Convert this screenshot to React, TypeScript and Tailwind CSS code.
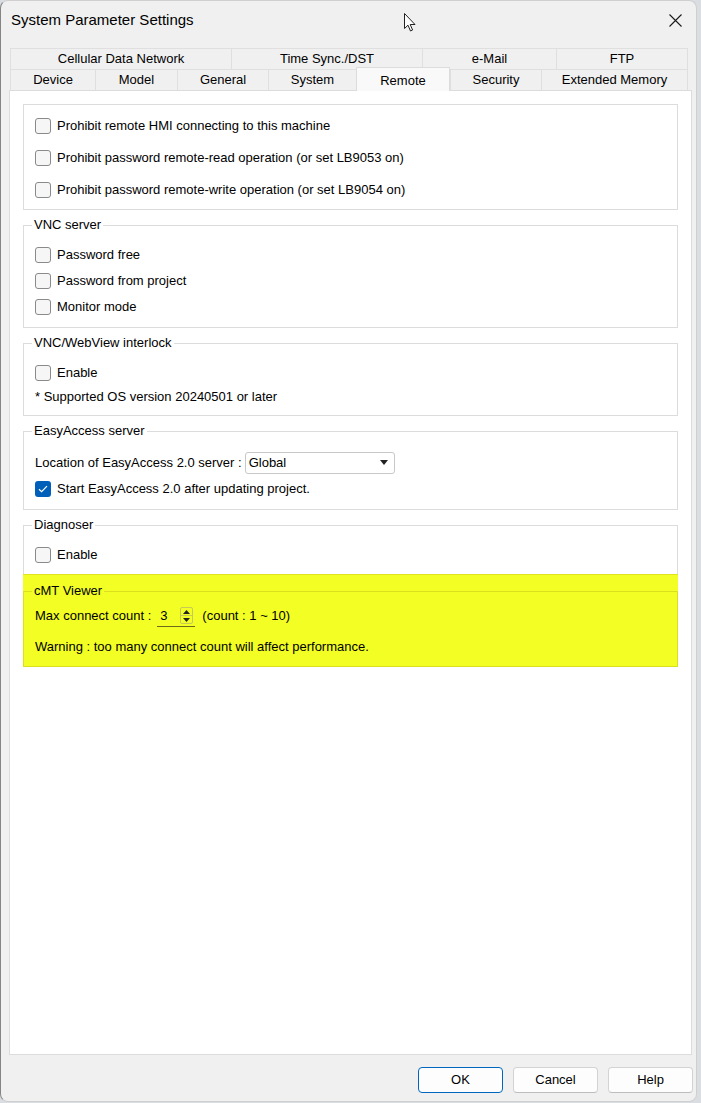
import React from 'react'

const FONT = "font-['Liberation_Sans',Arial,sans-serif]"

function Check({ checked }: { checked?: boolean }) {
  if (checked) {
    return (
      <span className="flex items-center justify-center w-[16px] h-[16px] rounded-[3px] bg-[#005fb8] shrink-0">
        <svg width="10" height="8" viewBox="0 0 10 8">
          <path d="M1 4.2 L3.6 6.6 L9 1.2" fill="none" stroke="#fff" strokeWidth="1.2" />
        </svg>
      </span>
    )
  }
  return (
    <span className="block w-[16px] h-[16px] rounded-[3px] border border-[#8a8a8a] bg-[#f6f6f6] shrink-0" />
  )
}

function CheckRow({ label, checked, h = 'h-[26px]' }: { label: string; checked?: boolean; h?: string }) {
  return (
    <div className={`flex items-center gap-[6px] ${h}`}>
      <Check checked={checked} />
      <span>{label}</span>
    </div>
  )
}

function Group({
  title,
  children,
  className = '',
  border = 'border-[#dcdcdc]',
}: {
  title: string
  children: React.ReactNode
  className?: string
  border?: string
}) {
  return (
    <fieldset className={`border ${border} px-[11px] ${className}`}>
      <legend className="px-[2px] -ml-[3px] leading-[16px]">{title}</legend>
      {children}
    </fieldset>
  )
}

const topTabs = [
  { label: 'Cellular Data Network', w: 'w-[221px]' },
  { label: 'Time Sync./DST', w: 'w-[191px]' },
  { label: 'e-Mail', w: 'w-[134px]' },
  { label: 'FTP', w: 'w-[132px]' },
]

const frontTabs = [
  { label: 'Device', w: 'w-[85px]' },
  { label: 'Model', w: 'w-[82px]' },
  { label: 'General', w: 'w-[91px]' },
  { label: 'System', w: 'w-[88px]' },
  { label: 'Remote', w: 'w-[94px]', active: true },
  { label: 'Security', w: 'w-[91px]' },
  { label: 'Extended Memory', w: 'w-[147px]' },
]

function Tabs() {
  return (
    <div className="ml-[9px] w-[678px] text-[13px]">
      <div className="flex h-[21px]">
        {topTabs.map((t, i) => (
          <div
            key={t.label}
            className={`${t.w} flex items-center justify-center border-t border-l border-[#dfdfdf] ${
              i === topTabs.length - 1 ? 'border-r' : ''
            }`}
          >
            {t.label}
          </div>
        ))}
      </div>
      <div className="flex items-end h-[21px]">
        {frontTabs.map((t, i) =>
          t.active ? (
            <div
              key={t.label}
              className={`${t.w} h-[24px] -mb-px relative z-10 flex items-start pt-[3px] justify-center bg-[#f9f9f9] border-t border-l border-r border-[#dcdcdc]`}
            >
              {t.label}
            </div>
          ) : (
            <div
              key={t.label}
              className={`${t.w} h-[21px] flex items-center justify-center border-t border-l border-[#dfdfdf] ${
                i === frontTabs.length - 1 ? 'border-r' : ''
              }`}
            >
              {t.label}
            </div>
          ),
        )}
      </div>
    </div>
  )
}

function Spin() {
  return (
    <div className="flex items-center w-[38px] h-[21px] border-b border-[#6b6b1a] ml-[6px]">
      <span className="pl-[3px] flex-1">3</span>
      <div className="flex flex-col w-[13px] h-[17px] mr-[2px] border border-[#c9c95a] rounded-[2px]">
        <div className="flex-1 flex items-center justify-center border-b border-[#c9c95a]">
          <svg width="7" height="4" viewBox="0 0 7 4">
            <path d="M0 4 L3.5 0 L7 4 Z" fill="#222" />
          </svg>
        </div>
        <div className="flex-1 flex items-center justify-center">
          <svg width="7" height="4" viewBox="0 0 7 4">
            <path d="M0 0 L7 0 L3.5 4 Z" fill="#222" />
          </svg>
        </div>
      </div>
    </div>
  )
}

function Button({ label, primary }: { label: string; primary?: boolean }) {
  return (
    <button
      className={`w-[85px] h-[26px] rounded-[4px] bg-[#fdfdfd] text-[13px] text-black border ${
        primary ? 'border-[#0067c0]' : 'border-[#d3d3d3] border-b-[#bdbdbd]'
      }`}
    >
      {label}
    </button>
  )
}

export default function App() {
  return (
    <div className={`relative w-[701px] h-[1103px] bg-[#dadde2] overflow-hidden ${FONT} text-black`}>
      <div className="w-[697px] h-[1102px] rounded-[8px] bg-[#f0f0f0] border border-[#cfcfcf] border-l-[#858585] flex flex-col">
        <div className="h-[39px] flex items-center justify-between pl-[10px] pr-[12px]">
          <span className="text-[15px]">System Parameter Settings</span>
          <svg width="13" height="13" viewBox="0 0 13 13" className="mr-[2px]">
            <path d="M0.5 0.5 L12.5 12.5 M12.5 0.5 L0.5 12.5" stroke="#1a1a1a" strokeWidth="1.1" />
          </svg>
        </div>

        <div className="pt-[8px]">
          <Tabs />
        </div>

        <div className="ml-[8px] w-[683px] h-[965px] bg-white border border-[#dcdcdc] px-[13px] pt-[13px] text-[13px]">
          <div className="border border-[#dcdcdc] px-[11px] pt-[5px] pb-[3px]">
            <CheckRow h="h-[32px]" label="Prohibit remote HMI connecting to this machine" />
            <CheckRow h="h-[32px]" label="Prohibit password remote-read operation (or set LB9053 on)" />
            <CheckRow h="h-[32px]" label="Prohibit password remote-write operation (or set LB9054 on)" />
          </div>

          <Group title="VNC server" className="mt-[7px] pt-[9px] pb-[7px]">
            <CheckRow label="Password free" />
            <CheckRow label="Password from project" />
            <CheckRow label="Monitor mode" />
          </Group>

          <Group title="VNC/WebView interlock" className="mt-[7px] pt-[10px] pb-[6px]">
            <CheckRow h="h-[24px]" label="Enable" />
            <div className="h-[24px] flex items-center">* Supported OS version 20240501 or later</div>
          </Group>

          <Group title="EasyAccess server" className="mt-[7px] pt-[10px] pb-[7px]">
            <div className="flex items-center h-[27px]">
              <span>Location of EasyAccess 2.0 server :</span>
              <div className="ml-[3px] w-[150px] h-[22px] rounded-[3px] border border-[#c8c8c8] flex items-center justify-between pl-[3px] pr-[6px]">
                <span>Global</span>
                <svg width="8" height="5" viewBox="0 0 8 5">
                  <path d="M0 0 L8 0 L4 5 Z" fill="#222" />
                </svg>
              </div>
            </div>
            <CheckRow checked label="Start EasyAccess 2.0 after updating project." />
          </Group>

          <Group title="Diagnoser" className="mt-[7px] pt-[9px] pb-[6px] border-b-0">
            <CheckRow label="Enable" />
          </Group>

          <div className="bg-[#f3fe24] border-t border-[#dfe21c]">
            <Group
              title="cMT Viewer"
              border="border-[#dcdf1e] border-t-[#dcdf1e]"
              className="mt-[8px] pt-[6px] pb-[8px]"
            >
              <div className="flex items-center h-[22px]">
                <span>Max connect count :</span>
                <Spin />
                <span className="ml-[7px]">(count : 1 ~ 10)</span>
              </div>
              <div className="mt-[9px] h-[22px] flex items-center">
                Warning : too many connect count will affect performance.
              </div>
            </Group>
          </div>
        </div>

        <div className="flex justify-end gap-[10px] pr-[3px] mt-[12px]">
          <Button label="OK" primary />
          <Button label="Cancel" />
          <Button label="Help" />
        </div>
      </div>

      {/* mouse pointer captured in the screenshot */}
      <svg width="13" height="20" viewBox="0 0 13 20" className="absolute left-[404px] top-[13px]">
        <path d="M0.5 0.5 L0.5 15.5 L4 12.2 L6.5 18 L8.6 17 L6.2 11.5 L11 11.5 Z" fill="#fff" stroke="#222" strokeWidth="1" />
      </svg>
    </div>
  )
}
